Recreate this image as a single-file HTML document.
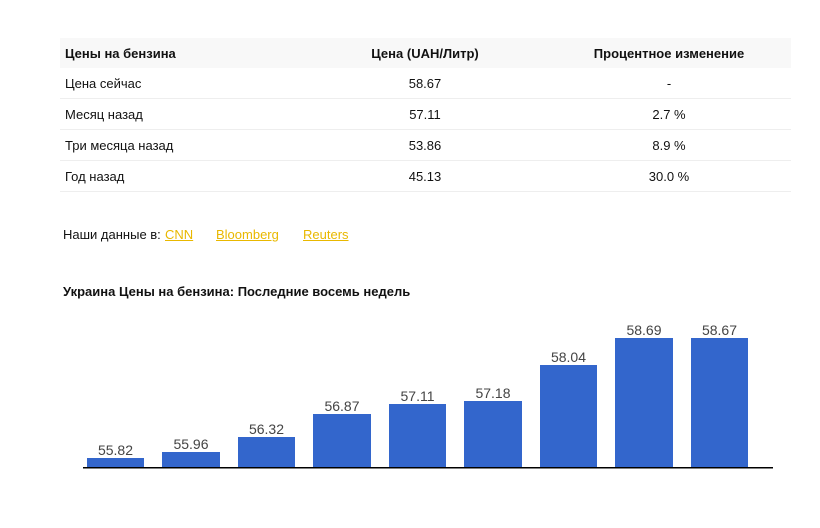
<!DOCTYPE html>
<html><head><meta charset="utf-8"><style>
body{margin:0;width:820px;height:528px;background:#fff;font-family:"Liberation Sans",sans-serif;color:#111;position:relative;overflow:hidden}
table{position:absolute;left:60px;top:38px;width:731px;border-collapse:collapse;font-size:13px;table-layout:fixed}
th{background:#f8f8f8;height:30px;font-weight:bold;padding:0}
td{height:30px;border-bottom:1px solid #eee;padding:0}
th,td{text-align:center}
th:first-child,td:first-child{text-align:left;padding-left:5px}
.src{position:absolute;left:63px;top:227px;font-size:13px}
.src a{color:#e9b800;text-decoration:underline}
.t{position:absolute;left:63px;top:284px;font-size:13px;font-weight:bold}
svg{position:absolute;left:0;top:0}
</style></head><body>
<table>
<colgroup><col style="width:243px"><col style="width:244px"><col></colgroup>
<tr><th>Цены на бензина</th><th>Цена (UAH/Литр)</th><th>Процентное изменение</th></tr>
<tr><td>Цена сейчас</td><td>58.67</td><td>-</td></tr>
<tr><td>Месяц назад</td><td>57.11</td><td>2.7 %</td></tr>
<tr><td>Три месяца назад</td><td>53.86</td><td>8.9 %</td></tr>
<tr><td>Год назад</td><td>45.13</td><td>30.0 %</td></tr>
</table>
<div class="src">Наши данные в: <a style="position:absolute;left:102px">CNN</a><a style="position:absolute;left:153px">Bloomberg</a><a style="position:absolute;left:240px">Reuters</a></div>
<div class="t">Украина Цены на бензина: Последние восемь недель</div>
<svg width="820" height="528" font-family="Liberation Sans, sans-serif" font-size="14" fill="#444" text-anchor="middle">
<g fill="#3366cc">
<rect x="87" y="458" width="57" height="10"/>
<rect x="162" y="452" width="58" height="16"/>
<rect x="238" y="437" width="57" height="31"/>
<rect x="313" y="414" width="58" height="54"/>
<rect x="389" y="404" width="57" height="64"/>
<rect x="464" y="401" width="58" height="67"/>
<rect x="540" y="365" width="57" height="103"/>
<rect x="615" y="338" width="58" height="130"/>
<rect x="691" y="338" width="57" height="130"/>
</g>
<rect x="83" y="467" width="690" height="1.5" fill="#000"/>
<text x="115.5" y="455">55.82</text>
<text x="191" y="449">55.96</text>
<text x="266.5" y="434">56.32</text>
<text x="342" y="411">56.87</text>
<text x="417.5" y="401">57.11</text>
<text x="493" y="398">57.18</text>
<text x="568.5" y="362">58.04</text>
<text x="644" y="335">58.69</text>
<text x="719.5" y="335">58.67</text>
</svg>
</body></html>
